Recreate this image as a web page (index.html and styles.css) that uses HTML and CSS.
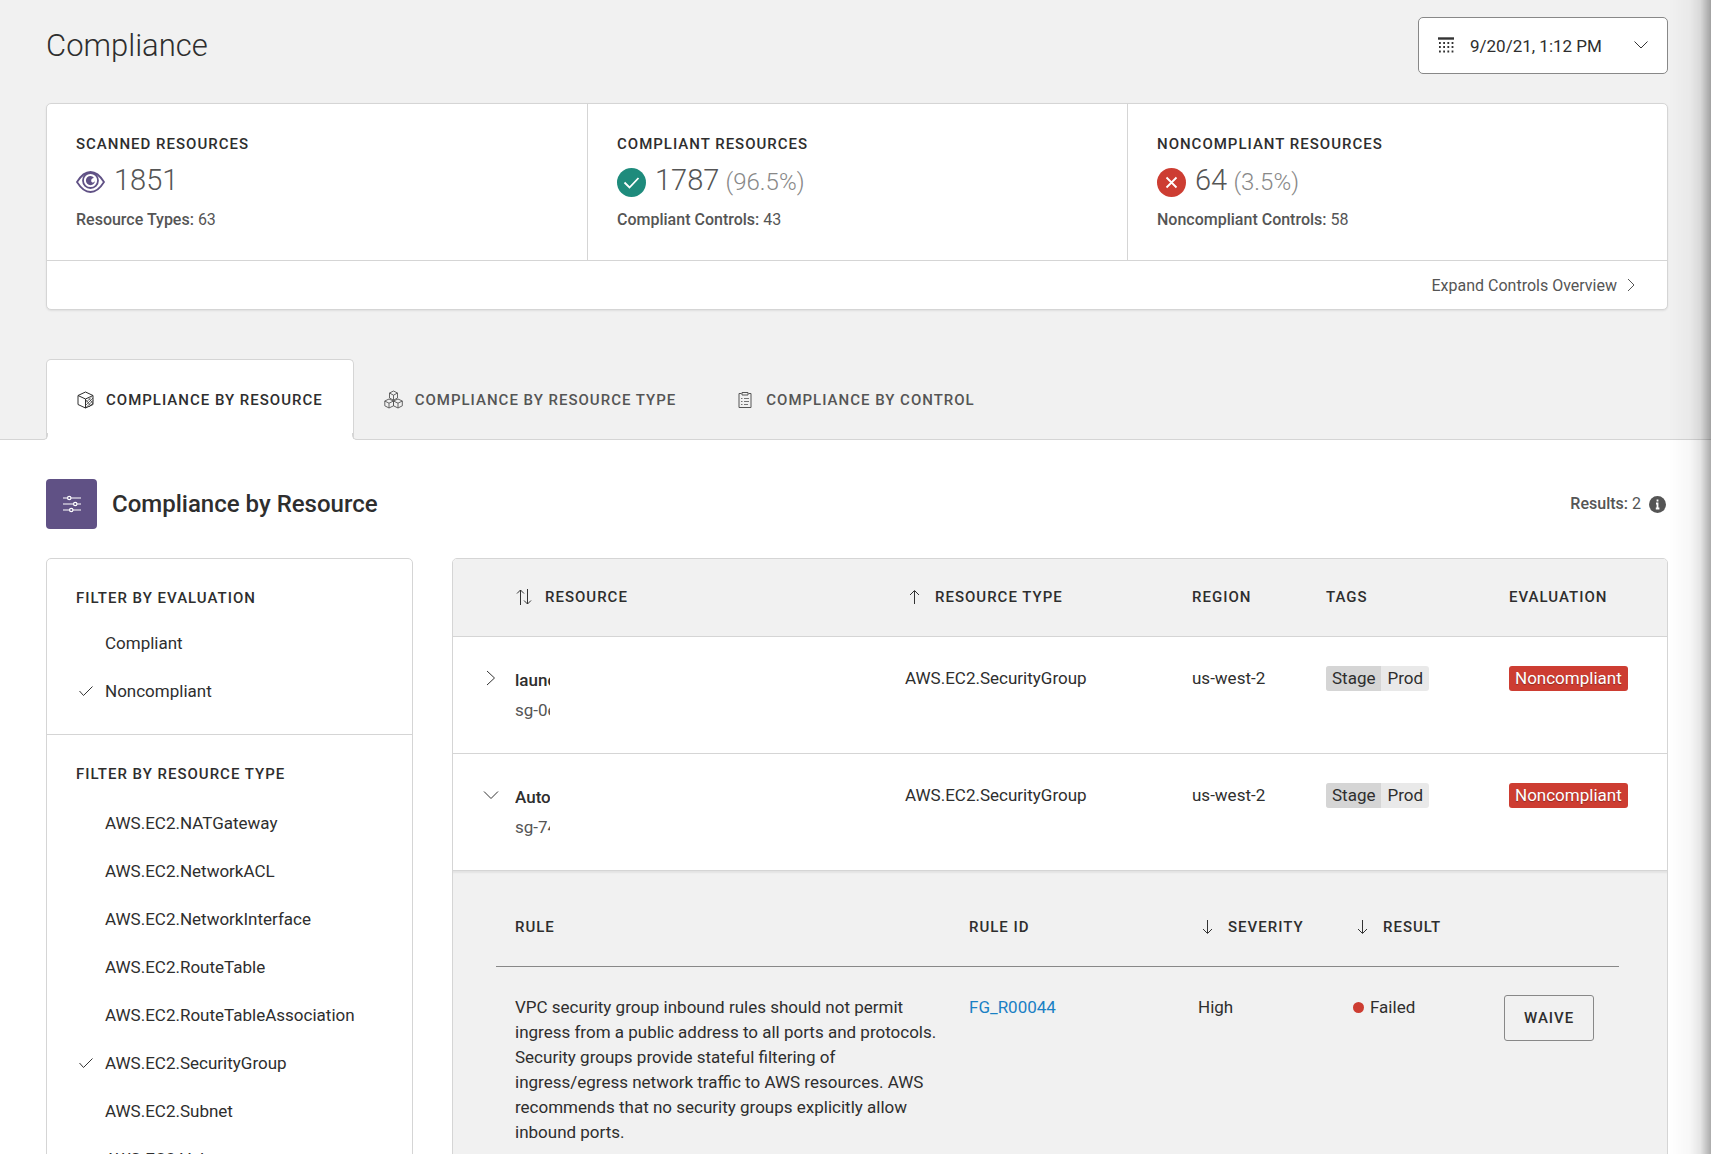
FILE: index.html
```
<!DOCTYPE html>
<html lang="en">
<head>
  <meta charset="UTF-8">
  <meta name="viewport" content="width=device-width, initial-scale=1.0">
  <title>Compliance</title>
  <link rel="stylesheet" href="styles.css">
</head>
<body>
  <header class="top">
    <div class="title-row">
      <h1>Compliance</h1>
      <div class="date-picker">
        <svg class="icon-calendar" width="16" height="16" viewBox="0 0 16 16"><path d="M0 1.5h16" stroke="#333" stroke-width="2.4"/><path d="M1 6h15M1 10h15M1 14.5h15" stroke="#333" stroke-width="1.8" stroke-dasharray="1.8 2.4"/></svg>
        <select aria-label="Scan date">
          <option>9/20/21, 1:12 PM</option>
        </select>
        <svg class="icon-caret" width="14" height="8" viewBox="0 0 14 8"><path d="M.5.5 7 7l6.500-6.500"/></svg>
      </div>
    </div>

    <section class="summary">
      <div class="stats">
        <div class="stat">
          <h2 class="label">Scanned Resources</h2>
          <div class="stat-value">
            <svg width="29" height="22" viewBox="0 0 29 22"><g fill="none" stroke="#605185" stroke-width="1.800"><path d="M1 11C5 4.500 9.500 1 14.500 1S24 4.500 28 11c-4 6.500-8.500 10-13.500 10S5 17.500 1 11z"/><circle cx="14.500" cy="9.500" r="7.500"/></g><path d="M14.500 5a4.600 4.600 0 1 0 4.600 4.600 2.500 2.500 0 0 1-3 1.900 2.600 2.600 0 0 1 1.900-4.600A4.600 4.600 0 0 0 14.500 5z" fill="#605185"/></svg>
            <div><span class="number">1851</span></div>
          </div>
          <p><b>Resource Types:</b> 63</p>
        </div>
        <div class="stat">
          <h2 class="label">Compliant Resources</h2>
          <div class="stat-value">
            <svg width="29" height="29" viewBox="0 0 29 29"><circle cx="14.500" cy="14.500" r="14.500" fill="#1e8b7c"/><path d="M7.500 14.500l5 5 9-9.500" fill="none" stroke="#fff" stroke-width="1.800"/></svg>
            <div><span class="number">1787</span> <span class="percent">(96.5%)</span></div>
          </div>
          <p><b>Compliant Controls:</b> 43</p>
        </div>
        <div class="stat">
          <h2 class="label">Noncompliant Resources</h2>
          <div class="stat-value">
            <svg width="29" height="29" viewBox="0 0 29 29"><circle cx="14.500" cy="14.500" r="14.500" fill="#cd3d32"/><path d="M9.500 9.500l10 10M19.500 9.500l-10 10" fill="none" stroke="#fff" stroke-width="1.800"/></svg>
            <div><span class="number">64</span> <span class="percent">(3.5%)</span></div>
          </div>
          <p><b>Noncompliant Controls:</b> 58</p>
        </div>
      </div>
      <div class="summary-footer">
        <button class="expand-button">Expand Controls Overview
          <svg width="8" height="14" viewBox="0 0 8 14"><path d="M1 1l6 6-6 6"/></svg>
        </button>
      </div>
    </section>

    <nav class="tabs">
      <button class="tab active">
        <svg width="17" height="18" viewBox="0 0 17 18"><path d="M8.500 1L16 4.500v9L8.500 17 1 13.500v-9zM1 4.500l7.500 3.500L16 4.500M8.500 8v9"/><path d="M9 11.500l5-5M9 14l7-7M9 16.500l7-7M12 16l4-4M9 9l5 6M12 7.500l3.500 4.500" stroke-width=".7"/></svg>
        Compliance by Resource
      </button>
      <button class="tab">
        <svg width="19" height="19" viewBox="0 0 19 19"><path d="M9.500 1l4 2v5l-4 2.200-4-2.200V3zM5.500 3l4 2.200 4-2.200M9.500 5.200v5M5 9l4.500 2v4.800L5 18 .800 15.800V11zM.800 11L5 13.200 9.500 11M5 13.200V18M14 9l4.300 2v4.800L14 18l-4.500-2.200V11zM9.500 11l4.500 2.200 4.300-2.200M14 13.200V18" stroke-width=".9"/></svg>
        Compliance by Resource Type
      </button>
      <button class="tab">
        <svg width="18" height="18" viewBox="0 0 18 18"><path d="M5.500 2.500H3v14h12v-14h-2.500M6 1.500h6v2.500H6z"/><path d="M5 7.500h1.500M8 7.500h5M5 10.500h1.500M8 10.500h5M5 13.500h1.500M8 13.500h4" stroke-width=".8"/></svg>
        Compliance by Control
      </button>
    </nav>
  </header>

  <main class="content">
    <div class="section-head">
      <button class="filter-toggle" aria-label="Toggle filters">
        <svg width="18" height="18" viewBox="0 0 18 18" fill="none" stroke="#fff" stroke-width="1.200"><path d="M0 3h4.500M8 3h10M0 9h10.500M14 9h4M0 15h6.500M10 15h8"/><circle cx="6.250" cy="3" r="1.700"/><circle cx="12.250" cy="9" r="1.700"/><circle cx="8.250" cy="15" r="1.700"/></svg>
      </button>
      <h2>Compliance by Resource</h2>
      <p class="results"><b>Results:</b> 2
        <svg width="17" height="17" viewBox="0 0 17 17"><circle cx="8.500" cy="8.500" r="8.500" fill="#555"/><path d="M8.500 3.500v2M7 7.500h1.500v5M6.800 12.500h3.600" stroke="#fff" stroke-width="1.800" fill="none"/></svg>
      </p>
    </div>

    <div class="columns">
      <aside class="filters">
        <section class="filter-group">
          <h3 class="label">Filter by Evaluation</h3>
          <label class="filter"><input type="checkbox"><svg viewBox="0 0 14 10"><path d="M.5 5l4 4.500 9-9"/></svg>Compliant</label>
          <label class="filter"><input type="checkbox" checked><svg viewBox="0 0 14 10"><path d="M.5 5l4 4.500 9-9"/></svg>Noncompliant</label>
        </section>
        <section class="filter-group types">
          <h3 class="label">Filter by Resource Type</h3>
          <label class="filter"><input type="checkbox"><svg viewBox="0 0 14 10"><path d="M.5 5l4 4.500 9-9"/></svg>AWS.EC2.NATGateway</label>
          <label class="filter"><input type="checkbox"><svg viewBox="0 0 14 10"><path d="M.5 5l4 4.500 9-9"/></svg>AWS.EC2.NetworkACL</label>
          <label class="filter"><input type="checkbox"><svg viewBox="0 0 14 10"><path d="M.5 5l4 4.500 9-9"/></svg>AWS.EC2.NetworkInterface</label>
          <label class="filter"><input type="checkbox"><svg viewBox="0 0 14 10"><path d="M.5 5l4 4.500 9-9"/></svg>AWS.EC2.RouteTable</label>
          <label class="filter"><input type="checkbox"><svg viewBox="0 0 14 10"><path d="M.5 5l4 4.500 9-9"/></svg>AWS.EC2.RouteTableAssociation</label>
          <label class="filter"><input type="checkbox" checked><svg viewBox="0 0 14 10"><path d="M.5 5l4 4.500 9-9"/></svg>AWS.EC2.SecurityGroup</label>
          <label class="filter"><input type="checkbox"><svg viewBox="0 0 14 10"><path d="M.5 5l4 4.500 9-9"/></svg>AWS.EC2.Subnet</label>
          <label class="filter"><input type="checkbox"><svg viewBox="0 0 14 10"><path d="M.5 5l4 4.500 9-9"/></svg>AWS.EC2.Volume</label>
        </section>
      </aside>

      <div class="table-box">
        <table class="resources">
          <colgroup>
            <col class="col-toggle"><col><col class="col-type"><col class="col-region"><col class="col-tags"><col class="col-eval">
          </colgroup>
          <thead>
            <tr>
              <th></th>
              <th><button class="sort label"><svg width="20" height="16" viewBox="0 0 20 16"><path d="M5.500 16V1M2 4.500L5.500 1 9 4.500M12.500 0v15M9 11.500l3.500 3.500 3.500-3.500"/></svg>Resource</button></th>
              <th><button class="sort label"><svg width="20" height="16" viewBox="0 0 20 16"><path d="M9.500 15V2M5 6l4.500-4.500L14 6"/></svg>Resource Type</button></th>
              <th class="label">Region</th>
              <th class="label">Tags</th>
              <th class="label">Evaluation</th>
            </tr>
          </thead>
          <tbody>
            <tr class="resource-row">
              <td class="toggle-cell"><button class="toggle" aria-label="Expand row"><svg width="16" height="16" viewBox="0 0 16 16"><path d="M4 1l7.500 7L4 15"/></svg></button></td>
              <td><div class="name">launch-wizard</div><div class="resource-id">sg-0ea</div></td>
              <td>AWS.EC2.SecurityGroup</td>
              <td>us-west-2</td>
              <td><span class="tag"><span class="tag-key">Stage</span><span class="tag-value">Prod</span></span></td>
              <td><span class="badge">Noncompliant</span></td>
            </tr>
            <tr class="resource-row">
              <td class="toggle-cell"><button class="toggle" aria-label="Collapse row"><svg width="16" height="16" viewBox="0 0 16 16"><path d="M1 4.500l7 7 7-7"/></svg></button></td>
              <td><div class="name">AutoScaling</div><div class="resource-id">sg-74a</div></td>
              <td>AWS.EC2.SecurityGroup</td>
              <td>us-west-2</td>
              <td><span class="tag"><span class="tag-key">Stage</span><span class="tag-value">Prod</span></span></td>
              <td><span class="badge">Noncompliant</span></td>
            </tr>
            <tr>
              <td class="details" colspan="6">
                <table class="rules">
                  <colgroup>
                    <col><col class="col-rule-id"><col class="col-severity"><col class="col-result"><col class="col-action">
                  </colgroup>
                  <thead>
                    <tr>
                      <th class="label">Rule</th>
                      <th class="label">Rule ID</th>
                      <th><button class="sort label"><svg width="20" height="16" viewBox="0 0 20 16"><path d="M9.500 1v13M5 10l4.500 4.500L14 10"/></svg>Severity</button></th>
                      <th><button class="sort label"><svg width="20" height="16" viewBox="0 0 20 16"><path d="M9.500 1v13M5 10l4.500 4.500L14 10"/></svg>Result</button></th>
                      <th></th>
                    </tr>
                  </thead>
                  <tbody>
                    <tr>
                      <td class="rule-text">VPC security group inbound rules should not permit ingress from a public address to all ports and protocols. Security groups provide stateful filtering of ingress/egress network traffic to AWS resources. AWS recommends that no security groups explicitly allow inbound ports.</td>
                      <td><a href="#">FG_R00044</a></td>
                      <td>High</td>
                      <td><span class="failed">Failed</span></td>
                      <td><button class="waive label">Waive</button></td>
                    </tr>
                  </tbody>
                </table>
              </td>
            </tr>
          </tbody>
        </table>
      </div>
    </div>
  </main>

  <div class="edge-shadow"></div>
</body>
</html>
```

FILE: styles.css
```
* {
  box-sizing: border-box;
}
body {
  margin: 0;
  height: 100vh;
  overflow: hidden;
  font-family: Roboto, "Liberation Sans", sans-serif;
  font-size: 17px;
  line-height: 25px;
  color: #2e2e2e;
  background: #fff;
}
h1, h2, h3, p {
  margin: 0;
}
b {
  font-weight: 500;
}
button {
  padding: 0;
  border: none;
  background: none;
  font-family: inherit;
  color: inherit;
  cursor: pointer;
}
svg {
  flex-shrink: 0;
}
.label {
  font-size: 15px;
  font-weight: 500;
  line-height: 20px;
  letter-spacing: 1px;
  text-transform: uppercase;
}

/* header */
.top {
  padding: 17px 43px 0 46px;
  background: #f1f1f1;
  border-bottom: 1px solid #d5d5d5;
}
.title-row {
  display: flex;
  align-items: center;
  justify-content: space-between;
  margin-bottom: 29px;
}
h1 {
  font-size: 31px;
  font-weight: 300;
  line-height: 40px;
}
.date-picker {
  position: relative;
}
.date-picker select {
  appearance: none;
  width: 250px;
  height: 57px;
  padding: 0 51px;
  border: 1px solid #888;
  border-radius: 5px;
  background: #fff;
  font-family: inherit;
  font-size: 17px;
  color: #2e2e2e;
}
.icon-calendar, .icon-caret {
  position: absolute;
  pointer-events: none;
}
.icon-calendar {
  left: 20px;
  top: 20px;
}
.icon-caret {
  right: 20px;
  top: 24px;
  fill: none;
  stroke: #333;
}

/* summary card */
.summary {
  border: 1px solid #d5d5d5;
  border-radius: 5px;
  background: #fff;
  box-shadow: 0 1px 2px rgba(0, 0, 0, 0.08);
}
.stats {
  display: grid;
  grid-template-columns: repeat(3, 1fr);
  border-bottom: 1px solid #d5d5d5;
}
.stat {
  padding: 30px 29px;
}
.stat + .stat {
  border-left: 1px solid #d5d5d5;
}
.stat-value {
  display: flex;
  align-items: center;
  gap: 9px;
  height: 36px;
  margin: 10px 0;
}
.number {
  font-size: 29px;
  font-weight: 300;
  color: #555;
}
.percent {
  margin-left: 2px;
  font-size: 24px;
  font-weight: 300;
  color: #888;
}
.stat p, .results {
  font-size: 16px;
  line-height: 20px;
  color: #555;
}
.summary-footer {
  display: flex;
  justify-content: flex-end;
  padding: 0 32px;
}
.expand-button {
  display: flex;
  align-items: center;
  gap: 10px;
  height: 48px;
  font-size: 16px;
  color: #555;
}
.expand-button svg {
  fill: none;
  stroke: #555;
}

/* tabs */
.tabs {
  display: flex;
  margin: 49px 0 -1px;
}
.tab {
  display: flex;
  align-items: center;
  gap: 12px;
  height: 81px;
  padding: 0 30px;
  font-size: 15px;
  font-weight: 500;
  letter-spacing: 1px;
  text-transform: uppercase;
  color: #555;
}
.tab svg {
  fill: none;
  stroke: currentColor;
}
.tab.active {
  position: relative;
  border: 1px solid #d5d5d5;
  border-bottom-color: #fff;
  border-radius: 5px 5px 0 0;
  background: #fff;
  color: #2e2e2e;
}
.tab.active::before, .tab.active::after {
  content: "";
  position: absolute;
  bottom: -1px;
  width: 6px;
  height: 6px;
  border-bottom: 1px solid #d5d5d5;
}
.tab.active::before {
  left: -6px;
  border-right: 1px solid #d5d5d5;
  border-bottom-right-radius: 5px;
  box-shadow: 2px 2px 0 #fff;
}
.tab.active::after {
  right: -6px;
  border-left: 1px solid #d5d5d5;
  border-bottom-left-radius: 5px;
  box-shadow: -2px 2px 0 #fff;
}

/* content */
.content {
  padding: 39px 43px 0 46px;
}
.section-head {
  display: flex;
  align-items: center;
  margin-bottom: 29px;
}
.filter-toggle {
  display: flex;
  align-items: center;
  justify-content: center;
  width: 51px;
  height: 50px;
  margin-right: 15px;
  border-radius: 4px;
  background: #605185;
}
.section-head h2 {
  font-size: 24px;
  font-weight: 500;
  line-height: 30px;
}
.results {
  display: flex;
  align-items: center;
  gap: 4px;
  margin-left: auto;
  padding-right: 2px;
}
.results svg {
  margin-left: 4px;
}
.columns {
  display: grid;
  grid-template-columns: 367px 1fr;
  gap: 39px;
}
.filters, .table-box {
  border: 1px solid #d5d5d5;
  border-radius: 5px;
  overflow: hidden;
}
.filter-group {
  padding: 29px 29px 19px;
}
.filter-group h3 {
  margin-bottom: 11px;
}
.types {
  border-top: 1px solid #d5d5d5;
}
.types h3 {
  margin-bottom: 15px;
}
.filter {
  display: flex;
  align-items: center;
  height: 48px;
  cursor: pointer;
}
.filter input {
  appearance: none;
  width: 0;
  height: 0;
  margin: 0;
}
.filter svg {
  visibility: hidden;
  width: 14px;
  height: 10px;
  margin: 0 12px 0 3px;
  fill: none;
  stroke: #333;
}
.filter input:checked + svg {
  visibility: visible;
}

/* tables */
table {
  width: 100%;
  table-layout: fixed;
  border-collapse: collapse;
}
th, td {
  padding: 0 20px;
  text-align: left;
  vertical-align: top;
}
.col-toggle { width: 42px; }
.col-type { width: 287px; }
.col-region { width: 134px; }
.col-tags { width: 183px; }
.col-eval { width: 178px; }
.resources > thead {
  background: #f1f1f1;
}
.resources > thead th {
  height: 77px;
  vertical-align: middle;
}
.resources > thead > tr, .resource-row {
  border-bottom: 1px solid #d5d5d5;
}
.sort {
  display: flex;
  align-items: center;
  gap: 10px;
}
.sort svg, .toggle svg {
  fill: none;
  stroke: #333;
}
.resource-row > td {
  padding-top: 29px;
  padding-bottom: 29px;
}
.resource-row > .toggle-cell {
  padding-left: 30px;
  padding-right: 0;
}
.toggle {
  display: flex;
  align-items: center;
  width: 16px;
  height: 25px;
}
.name, .resource-id {
  width: 35px;
  line-height: 28px;
  white-space: nowrap;
  overflow: hidden;
}
.name {
  margin-bottom: 2px;
  font-weight: 500;
}
.resource-id {
  color: #555;
}
.tag {
  display: inline-flex;
  border-radius: 3px;
  overflow: hidden;
  background: #e9e9e9;
}
.tag-key, .tag-value {
  padding: 0 6px;
}
.tag-key {
  background: #d5d5d5;
}
.badge {
  display: inline-block;
  padding: 0 6px;
  border-radius: 3px;
  background: #cd3d32;
  color: #fff;
  text-shadow: 0 1px 1px rgba(0, 0, 0, 0.3);
}
.details {
  padding: 0 48px 40px 43px;
  background: #f1f1f1;
  box-shadow: inset 0 3px 2px -1px rgba(0, 0, 0, 0.06);
}
.col-rule-id { width: 229px; }
.col-severity { width: 155px; }
.col-result { width: 151px; }
.col-action { width: 134px; }
.rules th {
  padding: 46px 19px 29px;
  border-bottom: 1px solid #888;
}
.rules td {
  padding: 28px 19px;
}
.rules .rule-text {
  padding-right: 10px;
}
.rules a {
  color: #1a80c4;
  text-decoration: none;
}
.failed {
  display: flex;
  align-items: center;
  gap: 6px;
}
.failed::before {
  content: "";
  width: 11px;
  height: 11px;
  border-radius: 50%;
  background: #cd3d32;
}
.waive {
  height: 46px;
  padding: 0 19px;
  border: 1px solid #888;
  border-radius: 3px;
}

/* shadow of the panel docked on the right */
.edge-shadow {
  position: fixed;
  top: 0;
  right: 0;
  bottom: 0;
  width: 42px;
  background: linear-gradient(to right, rgba(0, 0, 0, 0), rgba(0, 0, 0, 0.03) 50%, rgba(0, 0, 0, 0.1) 75%, rgba(0, 0, 0, 0.33));
  pointer-events: none;
}
```
